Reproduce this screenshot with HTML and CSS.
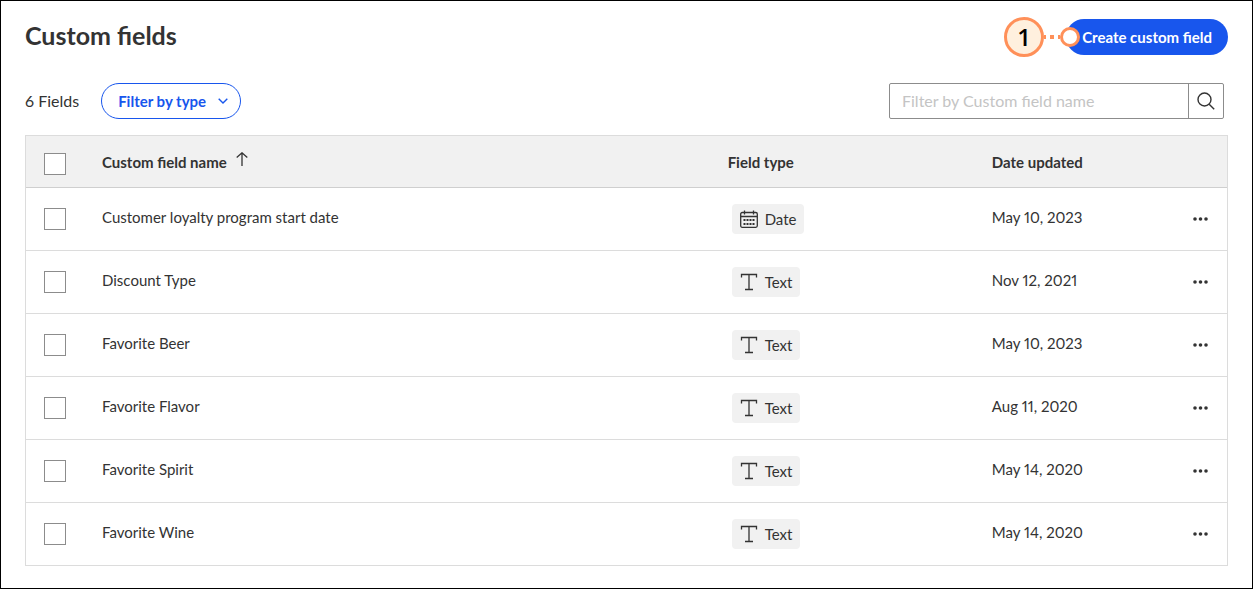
FILE: index.html
```
<!DOCTYPE html>
<html lang="en">
<head>
    <meta charset="UTF-8">
    <meta name="viewport" content="width=device-width, initial-scale=1.0">
    <title>Custom fields</title>
    <link rel="stylesheet" href="styles.css">
</head>
<body>
    <!-- Shared icons -->
    <svg class="sprite" aria-hidden="true">
        <symbol id="icon-text" viewBox="0 0 18 18">
            <path d="M1.5 4.5v-3h15v3M9 1.5v15M5 16.5h8" />
        </symbol>
        <symbol id="icon-date" viewBox="0 0 18 18">
            <rect x=".7" y="2.5" width="16.6" height="14.8" rx="1.5" />
            <path d="M.7 6.5h16.6M4.5 .5v4M13.5 .5v4" />
            <path d="M3.5 10h2M6.5 10h2M9.5 10h2M12.5 10h2M3.5 14h2M6.5 14h2M9.5 14h2M12.5 14h2" stroke-width="2" />
        </symbol>
        <symbol id="icon-more" viewBox="0 0 16 4">
            <circle cx="3" cy="2" r="1.8" />
            <circle cx="8.5" cy="2" r="1.8" />
            <circle cx="14" cy="2" r="1.8" />
        </symbol>
    </svg>

    <main class="page">
        <header class="header">
            <h1 class="title">Custom fields</h1>
            <div class="create">
                <button type="button" class="create-btn">Create custom field</button>
                <div class="callout">
                    <span class="callout-number">1</span>
                    <span class="callout-line"></span>
                    <span class="callout-end"></span>
                </div>
            </div>
        </header>

        <div class="toolbar">
            <span class="count">6 Fields</span>
            <button type="button" class="filter-btn">
                Filter by type
                <svg class="chevron" viewBox="0 0 10 6" aria-hidden="true"><path d="M.7.7 5 5 9.3.7" /></svg>
            </button>
            <form class="search">
                <input type="text" class="search-input" placeholder="Filter by Custom field name" aria-label="Filter by Custom field name">
                <button type="button" class="search-btn" aria-label="Search">
                    <svg viewBox="0 0 18 18" aria-hidden="true"><circle cx="7.5" cy="7.5" r="6.5" /><path d="m12.2 12.2 5 5" /></svg>
                </button>
            </form>
        </div>

        <table class="fields">
            <thead>
                <tr>
                    <th class="col-check"><input type="checkbox" class="check" aria-label="Select all"></th>
                    <th class="col-name">
                        Custom field name
                        <svg class="sort" viewBox="0 0 12 14" aria-hidden="true"><path d="M6 14V1M.7 5.5 6 .8l5.3 4.7" /></svg>
                    </th>
                    <th class="col-type">Field type</th>
                    <th class="col-date">Date updated</th>
                    <th class="col-more"></th>
                </tr>
            </thead>
            <tbody>
                <tr>
                    <td><input type="checkbox" class="check" aria-label="Select Customer loyalty program start date"></td>
                    <td class="text">Customer loyalty program start date</td>
                    <td><span class="chip"><svg><use href="#icon-date" /></svg>Date</span></td>
                    <td class="text">May 10, 2023</td>
                    <td><button type="button" class="more-btn" aria-label="More"><svg><use href="#icon-more" /></svg></button></td>
                </tr>
                <tr>
                    <td><input type="checkbox" class="check" aria-label="Select Discount Type"></td>
                    <td class="text">Discount Type</td>
                    <td><span class="chip"><svg><use href="#icon-text" /></svg>Text</span></td>
                    <td class="text">Nov 12, 2021</td>
                    <td><button type="button" class="more-btn" aria-label="More"><svg><use href="#icon-more" /></svg></button></td>
                </tr>
                <tr>
                    <td><input type="checkbox" class="check" aria-label="Select Favorite Beer"></td>
                    <td class="text">Favorite Beer</td>
                    <td><span class="chip"><svg><use href="#icon-text" /></svg>Text</span></td>
                    <td class="text">May 10, 2023</td>
                    <td><button type="button" class="more-btn" aria-label="More"><svg><use href="#icon-more" /></svg></button></td>
                </tr>
                <tr>
                    <td><input type="checkbox" class="check" aria-label="Select Favorite Flavor"></td>
                    <td class="text">Favorite Flavor</td>
                    <td><span class="chip"><svg><use href="#icon-text" /></svg>Text</span></td>
                    <td class="text">Aug 11, 2020</td>
                    <td><button type="button" class="more-btn" aria-label="More"><svg><use href="#icon-more" /></svg></button></td>
                </tr>
                <tr>
                    <td><input type="checkbox" class="check" aria-label="Select Favorite Spirit"></td>
                    <td class="text">Favorite Spirit</td>
                    <td><span class="chip"><svg><use href="#icon-text" /></svg>Text</span></td>
                    <td class="text">May 14, 2020</td>
                    <td><button type="button" class="more-btn" aria-label="More"><svg><use href="#icon-more" /></svg></button></td>
                </tr>
                <tr>
                    <td><input type="checkbox" class="check" aria-label="Select Favorite Wine"></td>
                    <td class="text">Favorite Wine</td>
                    <td><span class="chip"><svg><use href="#icon-text" /></svg>Text</span></td>
                    <td class="text">May 14, 2020</td>
                    <td><button type="button" class="more-btn" aria-label="More"><svg><use href="#icon-more" /></svg></button></td>
                </tr>
            </tbody>
        </table>
    </main>
</body>
</html>
```
FILE: styles.css
```
:root {
    --blue: #1856ed;
    --orange: #ff9059;
    --ink: #333333;
    --line: #dcdcdc;
    --grey-bg: #f1f1f1;
}

* {
    box-sizing: border-box;
}

body {
    margin: 0;
    background: white;
    color: var(--ink);
    font-family: Lato, 'Open Sans', sans-serif;
    font-size: 15px;
    line-height: 20px;
    font-variant-numeric: proportional-nums;
}

button,
input {
    font: inherit;
}

svg {
    fill: none;
    stroke: currentColor;
}

.sprite {
    position: absolute;
    width: 0;
    height: 0;
}

.page {
    min-height: 100vh;
    padding: 18px 24px 22px;
    border: 1px solid black;
}

/* Header */
.header {
    display: flex;
    justify-content: space-between;
    height: 36px;
    margin-bottom: 28px;
}

.title {
    margin: 0;
    font-size: 25px;
    line-height: 32px;
}

.create {
    position: relative;
}

.create-btn {
    height: 36px;
    padding: 0 16px;
    border: none;
    border-radius: 18px;
    background: var(--blue);
    color: white;
    font-weight: 700;
    cursor: pointer;
}

/* Step marker on top of the button */
.callout {
    position: absolute;
    top: -2px;
    right: 148px;
    display: flex;
    align-items: center;
}

.callout-number {
    width: 40px;
    height: 40px;
    border: 3px solid var(--orange);
    border-radius: 50%;
    background: #fff0de;
    color: black;
    font: 600 24px/34px 'Open Sans', sans-serif;
    text-align: center;
}

.callout-line {
    width: 16px;
    height: 4px;
    background: repeating-linear-gradient(90deg, var(--orange) 0 2px, transparent 2px 6px, var(--orange) 6px 10px, transparent 10px 14px, var(--orange) 14px 16px);
}

.callout-end {
    width: 20px;
    height: 20px;
    border: 3px solid var(--orange);
    border-radius: 50%;
    background: white;
}

/* Toolbar */
.toolbar {
    display: flex;
    align-items: center;
    margin-bottom: 16px;
}

.count {
    margin-right: 22px;
    font-size: 16px;
}

.filter-btn {
    display: flex;
    align-items: center;
    gap: 12px;
    height: 36px;
    padding: 0 12px 0 16px;
    border: 1px solid var(--blue);
    border-radius: 18px;
    background: white;
    color: var(--blue);
    font-weight: 700;
    cursor: pointer;
}

.chevron {
    width: 10px;
    height: 6px;
    stroke-width: 1.4;
}

.search {
    display: flex;
    width: 335px;
    height: 36px;
    margin: 0 4px 0 auto;
    border: 1px solid #8c8c8c;
    border-radius: 2px;
}

.search-input {
    flex: 1;
    min-width: 0;
    padding: 0 12px;
    border: none;
    background: none;
    font-size: 16px;
}

.search-input::placeholder {
    color: #c4c4c4;
}

.search-btn {
    display: grid;
    place-items: center;
    width: 35px;
    padding: 0;
    border: none;
    border-left: 1px solid #8c8c8c;
    background: none;
    color: var(--ink);
    cursor: pointer;
}

.search-btn svg {
    width: 18px;
    height: 18px;
    stroke-width: 1.4;
}

/* Table */
.fields {
    width: 100%;
    table-layout: fixed;
    border: 1px solid var(--line);
    border-spacing: 0;
}

.fields th,
.fields td {
    padding: 0 16px;
    text-align: left;
}

.fields th {
    height: 52px;
    border-bottom: 1px solid #cfcfcf;
    background: var(--grey-bg);
}

.fields td {
    height: 63px;
    border-bottom: 1px solid var(--line);
}

.fields tr:last-child td {
    height: 62px;
    border-bottom: none;
}

.fields .text {
    padding-bottom: 4px;
}

.fields .col-check {
    width: 60px;
    padding-top: 4px;
}

.col-type {
    width: 22%;
}

.col-date {
    width: 16%;
}

.col-more {
    width: 59px;
}

.check {
    display: block;
    appearance: none;
    width: 22px;
    height: 22px;
    margin: 0 0 0 2px;
    border: 1px solid #8c8c8c;
    background: white;
}

.check:checked {
    background: var(--blue);
}

.sort {
    width: 12px;
    height: 14px;
    margin-left: 6px;
    vertical-align: 2px;
    stroke-width: 1.3;
}

.chip {
    display: inline-flex;
    align-items: center;
    gap: 7px;
    height: 30px;
    margin-left: 4px;
    padding: 0 8px;
    border-radius: 4px;
    background: var(--grey-bg);
    vertical-align: middle;
}

.chip svg {
    width: 18px;
    height: 18px;
    stroke-width: 1.3;
}

.more-btn {
    display: block;
    padding: 4px 0;
    margin-left: 8px;
    border: none;
    background: none;
    color: var(--ink);
    cursor: pointer;
}

.more-btn svg {
    display: block;
    width: 16px;
    height: 4px;
    fill: currentColor;
    stroke: none;
}
```
